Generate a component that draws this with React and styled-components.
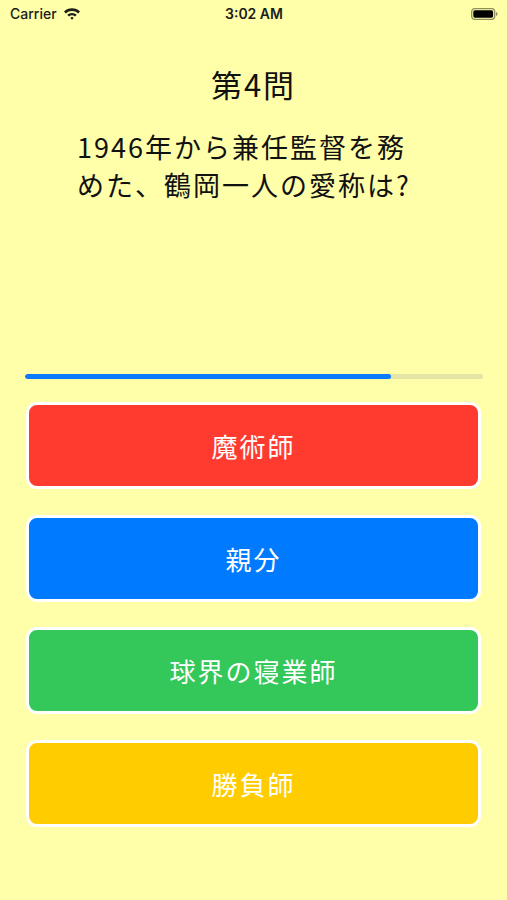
import React from "react";
import styled, { createGlobalStyle } from "styled-components";

const GlobalStyle = createGlobalStyle`
  html, body {
    margin: 0;
    padding: 0;
    background: #ffffaa;
  }
  body {
    font-family: "Noto Sans CJK JP", "Noto Sans", sans-serif;
  }
`;

const Screen = styled.div`
  width: 507px;
  height: 900px;
  background: #ffffaa;
  display: flex;
  flex-direction: column;
  overflow: hidden;
`;

const StatusBar = styled.div`
  height: 27px;
  display: grid;
  grid-template-columns: 1fr auto 1fr;
  align-items: center;
  padding: 0 9px 0 10px;
  font-family: Inter, "Liberation Sans", sans-serif;
  font-size: 14px;
  color: #1c1c1c;
`;

const Carrier = styled.div`
  display: flex;
  align-items: center;
  gap: 6px;
  font-weight: 500;
`;

const Clock = styled.div`
  font-weight: 600;
`;

const Battery = styled.div`
  display: flex;
  justify-content: flex-end;
`;

const Title = styled.h1`
  margin: 38px 0 0;
  text-align: center;
  font-size: 31px;
  line-height: 38px;
  font-weight: 400;
  letter-spacing: 2px;
  color: #111;
`;

const Question = styled.p`
  margin: 25px 0 0 77px;
  width: 355px;
  font-size: 27px;
  line-height: 38px;
  letter-spacing: 2px;
  color: #111;
`;

const Progress = styled.div`
  margin: 170px 24px 0 25px;
  height: 5px;
  border-radius: 3px;
  background: #e4e4a6;
  overflow: hidden;
`;

const ProgressFill = styled.div`
  height: 100%;
  border-radius: 3px;
  background: #0a7aff;
`;

const Choices = styled.div`
  margin-top: 23px;
  padding: 0 26px;
  display: flex;
  flex-direction: column;
  gap: 25.5px;
`;

const ChoiceButton = styled.button`
  height: 87px;
  width: 100%;
  border: 3px solid #ffffff;
  border-radius: 11px;
  background: ${(p) => p.color};
  color: #ffffff;
  font-family: "Noto Sans CJK JP", "Noto Sans", sans-serif;
  font-size: 26px;
  letter-spacing: 2px;
  display: flex;
  align-items: center;
  justify-content: center;
  padding: 0;
`;

const WifiIcon = () => (
  <svg width="18" height="13" viewBox="0 0 18 13">
    <path d="M1 4.6 A11.5 11.5 0 0 1 17 4.6 L15.2 6.4 A9 9 0 0 0 2.8 6.4 Z" fill="#1c1c1c" />
    <path d="M4.2 7.8 A7 7 0 0 1 13.8 7.8 L12 9.6 A4.5 4.5 0 0 0 6 9.6 Z" fill="#1c1c1c" />
    <path d="M7.3 10.9 A2.5 2.5 0 0 1 10.7 10.9 L9 12.7 Z" fill="#1c1c1c" />
  </svg>
);

const BatteryIcon = () => (
  <svg width="27" height="12" viewBox="0 0 27 12">
    <rect x="0.7" y="0.7" width="23" height="10.6" rx="3" fill="none" stroke="#8f8f5e" strokeWidth="1.3" />
    <rect x="2.3" y="2.3" width="19.8" height="7.4" rx="1.6" fill="#000" />
    <path d="M25 4 Q26.6 4.3 26.6 6 Q26.6 7.7 25 8 Z" fill="#8f8f5e" />
  </svg>
);

const choices = [
  { label: "魔術師", color: "#ff3b30" },
  { label: "親分", color: "#007aff" },
  { label: "球界の寝業師", color: "#34c759" },
  { label: "勝負師", color: "#ffcc00" },
];

export default function App() {
  const progress = 0.8;
  return (
    <Screen>
      <GlobalStyle />
      <StatusBar>
        <Carrier>
          Carrier
          <WifiIcon />
        </Carrier>
        <Clock>3:02 AM</Clock>
        <Battery>
          <BatteryIcon />
        </Battery>
      </StatusBar>
      <Title>第4問</Title>
      <Question>
        1946年から兼任監督を務めた、鶴岡一人の愛称は?
      </Question>
      <Progress>
        <ProgressFill style={{ width: `${progress * 100}%` }} />
      </Progress>
      <Choices>
        {choices.map((c) => (
          <ChoiceButton key={c.label} color={c.color}>
            {c.label}
          </ChoiceButton>
        ))}
      </Choices>
    </Screen>
  );
}
